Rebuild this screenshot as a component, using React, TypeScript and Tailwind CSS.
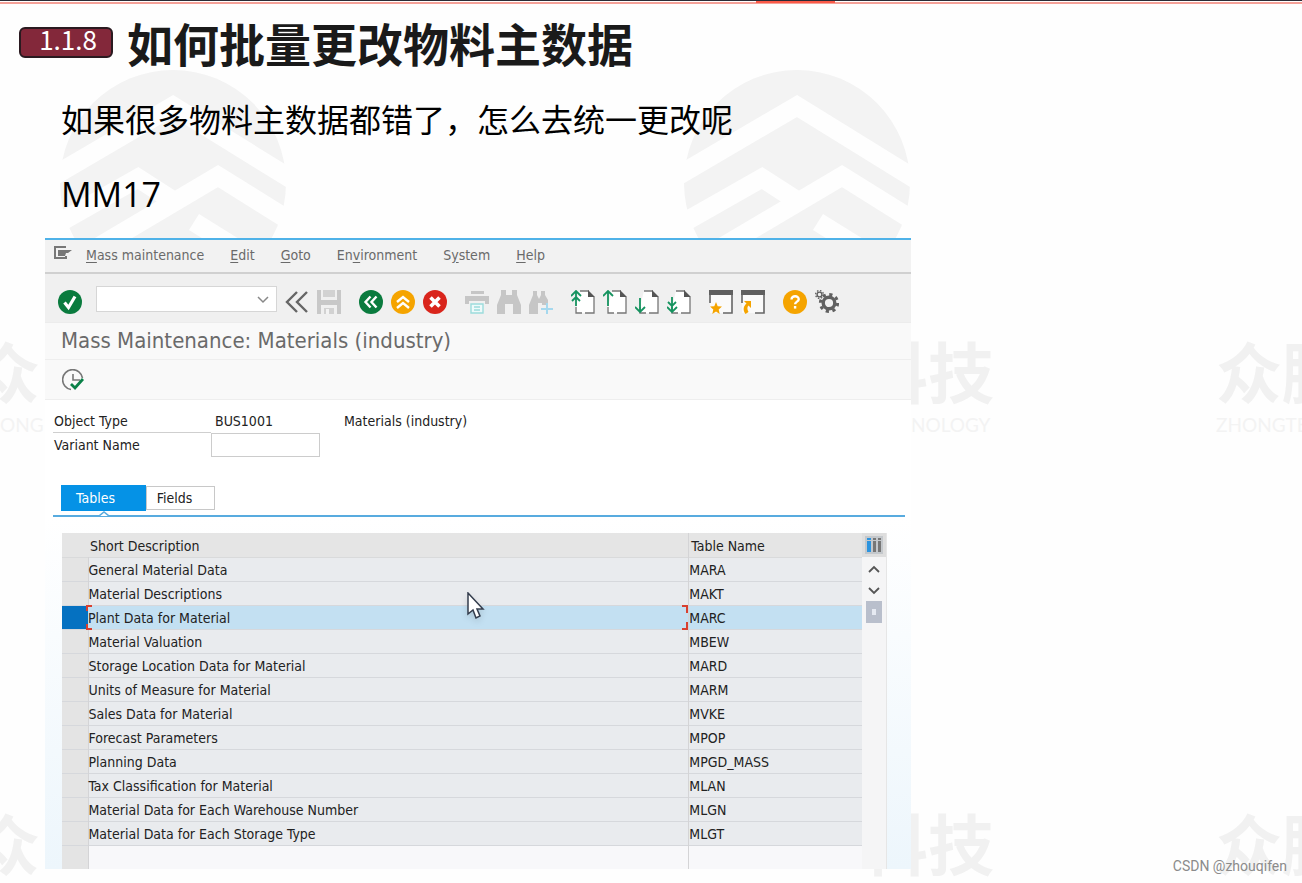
import React from 'react';

const sapFont = "font-['DejaVu_Sans_Condensed','DejaVu_Sans',sans-serif]";
const slideFont = "font-['Noto_Sans_CJK_SC',sans-serif]";

const menus = [
  { before: '', key: 'M', after: 'ass maintenance' },
  { before: '', key: 'E', after: 'dit' },
  { before: '', key: 'G', after: 'oto' },
  { before: 'En', key: 'v', after: 'ironment' },
  { before: 'S', key: 'y', after: 'stem' },
  { before: '', key: 'H', after: 'elp' },
];

const rows = [
  ['General Material Data', 'MARA'],
  ['Material Descriptions', 'MAKT'],
  ['Plant Data for Material', 'MARC'],
  ['Material Valuation', 'MBEW'],
  ['Storage Location Data for Material', 'MARD'],
  ['Units of Measure for Material', 'MARM'],
  ['Sales Data for Material', 'MVKE'],
  ['Forecast Parameters', 'MPOP'],
  ['Planning Data', 'MPGD_MASS'],
  ['Tax Classification for Material', 'MLAN'],
  ['Material Data for Each Warehouse Number', 'MLGN'],
  ['Material Data for Each Storage Type', 'MLGT'],
];

const selectedTable = 'MARC';

function Disc({ color, children }: { color: string; children: React.ReactNode }) {
  return (
    <svg viewBox="0 0 24 24" className="size-6" fill="none" stroke="#fff" strokeWidth="2.4">
      <circle cx="12" cy="12" r="12" fill={color} stroke="none" />
      {children}
    </svg>
  );
}

function PageIcon({ arrow }: { arrow: string }) {
  return (
    <svg viewBox="0 0 24 24" className="size-6" fill="none">
      <path d="M9 1h9l5 5v17H6V13z" fill="#fff" />
      <path d="M9 1h9M23 7v16h-9M5 17v6h6" stroke="#777" strokeWidth="1.3" />
      <path d="M17 0l7 7h-7z" fill="#555" />
      <path d={arrow} stroke="#15935f" strokeWidth="1.8" />
    </svg>
  );
}

function WindowIcon({ children }: { children: React.ReactNode }) {
  return (
    <svg viewBox="0 0 24 24" className="size-6" fill="none">
      <path d="M1 5h22v18H1z" fill="#fafafa" />
      <path d="M1 13V3M23 3v20h-9" stroke="#666" strokeWidth="1.6" />
      <path d="M0 0h24v5H0z" fill="#5f5f5f" />
      {children}
    </svg>
  );
}

function Binoculars({ next = false }: { next?: boolean }) {
  return (
    <svg viewBox="0 0 24 24" className="size-6" fill="#c6c6c6">
      {next ? (
        <>
          <path d="M4 1h4v4l2 4 2-4V1h4v4l3 5v5h-6v-2H9v11H0v-9l4-10z" />
          <path d="M18 13v11M12 19h12" stroke="#a5d8ee" strokeWidth="2" />
        </>
      ) : (
        <path d="M4 0h5v5h6V0h5v5l4 10v9h-8V14H8v10H0v-9L4 5z" />
      )}
    </svg>
  );
}

const toolGroups: { label: string; icon: React.ReactNode }[][] = [
  [
    {
      label: 'Back to start',
      icon: (
        <svg viewBox="0 0 24 24" className="size-6" fill="none" stroke="#666" strokeWidth="2.4">
          <path d="M12 2L2 12l10 10M22 2L12 12l10 10" />
        </svg>
      ),
    },
    {
      label: 'Save',
      icon: (
        <svg viewBox="0 0 24 24" className="size-6" fill="#c8c8c8">
          <path d="M0 0h4v10h16V0h4v24h-4v-9H4v9H0z" />
          <path d="M6 0h12v7H6zM7 18h10v6H7z" fill="#d2d2d2" />
          <path d="M9 19h3v5H9z" fill="#f3f3f3" />
        </svg>
      ),
    },
  ],
  [
    { label: 'Back', icon: <Disc color="#0a7b3e"><path d="M11.500 6.500L6.500 12l5 5.500M17.500 6.500L12.500 12l5 5.500" /></Disc> },
    { label: 'Exit', icon: <Disc color="#f5a400"><path d="M6 12l6-5 6 5M6 18l6-5 6 5" /></Disc> },
    { label: 'Cancel', icon: <Disc color="#d9251c"><path d="M7.500 7.500l9 9M16.500 7.500l-9 9" strokeWidth="3.600" /></Disc> },
  ],
  [
    {
      label: 'Print',
      icon: (
        <svg viewBox="0 0 24 24" className="size-6" fill="#c6c6c6">
          <path d="M6 1h13v3H6zM0 6h24v8h-4v-3H4v3H0z" />
          <path d="M6 14h12v9H6z" fill="#eefafa" stroke="#9cdcdc" strokeWidth="1.4" />
          <path d="M9 17h6M9 20h6" stroke="#9cdcdc" strokeWidth="1.4" />
        </svg>
      ),
    },
    { label: 'Find', icon: <Binoculars /> },
    { label: 'Find next', icon: <Binoculars next /> },
  ],
  [
    { label: 'First page', icon: <PageIcon arrow="M5 16V2M0 6l5-5 5 5M1 11l4-4 4 4" /> },
    { label: 'Previous page', icon: <PageIcon arrow="M5 16V2M0 6l5-5 5 5" /> },
    { label: 'Next page', icon: <PageIcon arrow="M5 8v14M0 17l5 5 5-5" /> },
    { label: 'Last page', icon: <PageIcon arrow="M5 7v15M0 17l5 5 5-5M1 12l4 4 4-4" /> },
  ],
  [
    {
      label: 'New session',
      icon: (
        <WindowIcon>
          <path d="M7 12l1.700 4.200 4.300.3-3.300 2.900 1 4.600L7 21.500 3.300 24l1-4.600L1 16.500l4.300-.3z" fill="#f5a400" />
        </WindowIcon>
      ),
    },
    {
      label: 'Create shortcut',
      icon: (
        <WindowIcon>
          <path d="M3 11h7v7l-2.500-2.500C6 17 6 19 7.500 22l-3 2c-3-4-2-8 1-10.500z" fill="#f5a400" />
        </WindowIcon>
      ),
    },
  ],
  [
    {
      label: 'Help',
      icon: (
        <Disc color="#f5a400">
          <path d="M8.500 9.500c0-4.500 7.500-4 7.200-.2-.2 2.400-3.500 2.300-3.600 5" />
          <path d="M12.100 16v2.600" />
        </Disc>
      ),
    },
    {
      label: 'Customize layout',
      icon: (
        <svg viewBox="0 0 24 24" className="size-6" fill="none" stroke="#606060">
          <circle cx="14" cy="13" r="5.800" strokeWidth="3.400" />
          <circle cx="14" cy="13" r="8.600" strokeWidth="3" strokeDasharray="3.200 3.554" />
          <circle cx="4.500" cy="4.500" r="2.400" strokeWidth="1.400" />
          <circle cx="4.500" cy="4.500" r="3.900" strokeWidth="1.300" strokeDasharray="1.500 1.563" />
        </svg>
      ),
    },
  ],
];

// Faint company logo: a disc cut by white mountain ridges
function RidgeLogo() {
  return (
    <svg viewBox="0 0 226 226" className="h-[226px] w-[226px]" fill="none">
      <circle cx="113" cy="113" r="113" fill="#f3f3f3" />
      <path
        d="M-10 108L113 36l123 76M-10 158L78 108l34 22M30 182L158 106l80 50M134 152l90 56"
        stroke="#fefefe"
        strokeWidth="19"
      />
    </svg>
  );
}

function Watermarks() {
  return (
    <div aria-hidden="true" className={`pointer-events-none absolute inset-0 overflow-hidden ${slideFont}`}>
      <div className="absolute left-[60px] top-[70px] flex gap-[398px]">
        <RidgeLogo />
        <RidgeLogo />
      </div>
      {['top-[334px]', 'top-[806px]'].map((top) => (
        <div
          key={top}
          className={`absolute -left-[26px] flex w-[1400px] whitespace-nowrap text-[66px] font-bold leading-[70px] text-[#f1f1f1] ${top}`}
        >
          <span className="w-[888px]">众</span>
          <span className="w-[354px]">科技</span>
          <span>众腾</span>
        </div>
      ))}
      <div className="absolute left-0 top-[413px] flex w-[1400px] whitespace-nowrap font-['Lato',sans-serif] text-[19px] leading-6 text-[#f3f3f3]">
        <span className="w-[911px]">ONG</span>
        <span className="w-[305px]">NOLOGY</span>
        <span>ZHONGTE</span>
      </div>
    </div>
  );
}

function MenuBar() {
  return (
    <nav className="flex h-[34px] items-center border-b-2 border-[#d0d0d0] bg-[#f2f2f2] pb-0.5 pl-2 text-[#6a6a6a]">
      <svg viewBox="0 0 20 14" className="mb-1 h-3.5 w-5" fill="none">
        <path d="M13 1H2v11h11v-2" stroke="#777" strokeWidth="2" />
        <path d="M5 4h14l-4 3h-2l-1 3H5z" fill="#777" />
      </svg>
      <ul className="ml-[13px] flex gap-[26px]">
        {menus.map((m) => (
          <li key={m.key}>
            <button type="button">
              {m.before}
              <u className="underline-offset-2">{m.key}</u>
              {m.after}
            </button>
          </li>
        ))}
      </ul>
    </nav>
  );
}

function Toolbar() {
  return (
    <div className="flex h-[49px] items-center gap-[18px] border-b border-[#ececec] bg-[#f0f0f0] pl-[13px] pt-2">
      <div className="flex items-center">
        <button type="button" aria-label="Enter" className="mr-[14px]">
          <Disc color="#0a7b3e">
            <path d="M6.500 12.500l4 5 6.500-11" strokeWidth="3.200" />
          </Disc>
        </button>
        <div className="relative mb-1.5 flex">
          <input
            aria-label="Command"
            className="h-[26px] w-[181px] border border-[#d6d6d6] bg-white px-2 outline-none"
          />
          <svg viewBox="0 0 12 8" className="absolute right-2 top-2.5 h-2 w-3" fill="none" stroke="#888" strokeWidth="1.5">
            <path d="M1 1l5 5 5-5" />
          </svg>
        </div>
        <div className="ml-2 flex gap-2">
          {toolGroups[0].map((t) => (
            <button key={t.label} type="button" aria-label={t.label}>{t.icon}</button>
          ))}
        </div>
      </div>
      {toolGroups.slice(1).map((group) => (
        <div key={group[0].label} className="flex gap-2">
          {group.map((t) => (
            <button key={t.label} type="button" aria-label={t.label}>{t.icon}</button>
          ))}
        </div>
      ))}
    </div>
  );
}

// Red corner marks round the focused cell
function FocusMarks() {
  return (
    <>
      <span className="absolute -left-0.5 -top-px h-1.5 w-1.5 border-l-2 border-t-2 border-[#d8402f]" />
      <span className="absolute -bottom-px -left-0.5 h-1.5 w-1.5 border-b-2 border-l-2 border-[#d8402f]" />
      <span className="absolute -top-px right-0 h-2 w-1.5 border-r-2 border-t-2 border-[#d8402f]" />
      <span className="absolute -bottom-px right-0 h-2 w-1.5 border-b-2 border-r-2 border-[#d8402f]" />
    </>
  );
}

function MassTable() {
  return (
    <div className="ml-[17px] mr-6 flex bg-[#f5f5f6]">
      <table className="min-w-0 flex-1 table-fixed border-collapse text-left text-[#222]">
        <colgroup>
          <col className="w-[26px]" />
          <col />
          <col className="w-[173px]" />
        </colgroup>
        <thead>
          <tr className="h-6 border-b border-[#d9dadb] bg-[#e5e5e5]">
            <th aria-label="Select" />
            <th className="p-0 pl-0.5 pt-0.5 font-normal">Short Description</th>
            <th className="border-l border-[#d4d4d6] p-0 pl-0.5 pt-0.5 font-normal">Table Name</th>
          </tr>
        </thead>
        <tbody>
          {rows.map(([description, table]) => {
            const selected = table === selectedTable;
            return (
              <tr
                key={table}
                className={`h-6 border-b border-[#d6d8dc] ${selected ? 'bg-[#c3e0f2]' : 'bg-[#e9ebee]'}`}
              >
                <td className={selected ? 'bg-[#0571c1]' : 'border-r border-[#d4d4d6] bg-[#e4e4e4]'} />
                <td className="relative p-0 pt-0.5">
                  {selected && <FocusMarks />}
                  {description}
                </td>
                <td className="border-l border-[#d4d4d6] p-0 pt-0.5">{table}</td>
              </tr>
            );
          })}
          <tr className="h-6 bg-[#f8f8fa]">
            <td className="border-r border-[#d4d4d6] bg-[#e4e4e4]" />
            <td />
            <td className="border-l border-[#d4d4d6]" />
          </tr>
        </tbody>
      </table>
      <div className="flex w-[25px] flex-col items-center border-r border-[#e6e6e6]">
        <button type="button" aria-label="Configure columns" className="flex h-6 w-full items-center justify-center bg-[#dedede]">
          <svg viewBox="0 0 18 18" className="size-[18px]">
            <path d="M0 0h18v18H0z" fill="#c4c8cc" />
            <path d="M2 2h4v2H2zM2 5h4v11H2z" fill="#2c94df" />
            <path d="M8 2h3v2H8zM8 5h3v11H8zM13 2h3v2h-3zM13 5h3v11h-3z" fill="#777" />
          </svg>
        </button>
        <button type="button" aria-label="Scroll up" className="flex h-6 items-center">
          <svg viewBox="0 0 12 8" className="h-2 w-3" fill="none" stroke="#555" strokeWidth="1.8">
            <path d="M1 7l5-5 5 5" />
          </svg>
        </button>
        <button type="button" aria-label="Scroll down" className="flex h-5 items-center">
          <svg viewBox="0 0 12 8" className="h-2 w-3" fill="none" stroke="#555" strokeWidth="1.8">
            <path d="M1 1l5 5 5-5" />
          </svg>
        </button>
        <div className="flex h-[22px] w-4 items-center justify-center bg-[#b9bfcc]">
          <span className="h-1.5 w-1 bg-[#e6eaf2]" />
        </div>
      </div>
    </div>
  );
}

function SapWindow() {
  return (
    <section className={`relative ml-[45px] w-[66.5%] border-t-2 border-[#4fb2e8] bg-white text-[14px] leading-5 ${sapFont}`}>
      <MenuBar />
      <Toolbar />
      <h2 className="flex h-[37px] items-center border-b border-[#eeeeee] bg-[#f9f9f9] pl-4 text-[22px] text-[#6a6a6a]">
        Mass Maintenance: Materials (industry)
      </h2>
      <div className="flex h-10 items-center border-b border-[#eeeeee] bg-[#f9f9f9] pl-[17px]">
        <button type="button" aria-label="Execute">
          <svg viewBox="0 0 22 22" className="size-[22px]" fill="none">
            <path d="M20.500 9A10 10 0 1 0 9 20.500" stroke="#777" strokeWidth="1.600" />
            <path d="M11 5v6h7" stroke="#777" strokeWidth="1.600" />
            <path d="M9 15l4 4 8-9" stroke="#0a8148" strokeWidth="2.800" />
          </svg>
        </button>
      </div>

      <div className="bg-linear-to-b from-white from-25% to-[#edf6fc]">
        <div className="mx-2 bg-white pb-1 pt-[11px] text-[#222]">
          <div className="flex h-[22px]">
            <span className="w-[158px] border-b border-[#cfcfcf] pl-px">Object Type</span>
            <span className="w-[129px] pl-1">BUS1001</span>
            <span className="pl-1">Materials (industry)</span>
          </div>
          <div className="flex items-center">
            <label htmlFor="variant" className="w-[158px] pl-px">Variant Name</label>
            <input id="variant" className="h-6 w-[109px] border border-[#cccccc] bg-white px-1 outline-none" />
          </div>
          <div className="mt-7 flex items-center pl-2">
            <button type="button" className="relative h-[26px] w-[85px] bg-[#0592e6] pr-4 text-white">
              Tables
              <svg viewBox="0 0 10 5" className="absolute -bottom-[5px] left-[38px] h-[5px] w-2.5" fill="#fff" stroke="#58abdf" strokeWidth="1.500">
                <path d="M0 5l5-4 5 4" />
              </svg>
            </button>
            <button type="button" className="h-6 w-[69px] border border-[#c8c8c8] bg-white pr-3">
              Fields
            </button>
          </div>
        </div>
        <div className="ml-2 mr-1.5 border-t-2 border-[#58abdf]" />
        <div className="pt-4">
          <MassTable />
        </div>
      </div>

      <svg viewBox="0 0 18 28" className="absolute left-[422px] top-[352px] h-7 w-[18px] drop-shadow-md">
        <path d="M1 1v21l5-4 3 8 4-2-3-7h6z" fill="#fff" stroke="#333c4c" strokeWidth="1.500" />
      </svg>
    </section>
  );
}

export default function App() {
  return (
    <main className="relative min-h-screen overflow-hidden bg-[#fefefe] pb-3">
      <Watermarks />
      <div className="relative border-b-2 border-[#f5a198]">
        <div className="h-0.5 border-t border-[#2b2b35]" />
        <div className="absolute left-[58.1%] top-px h-0.5 w-[6%] bg-[#fb5a48]" />
      </div>
      <header className={`relative flex items-center gap-[14px] pl-[19px] pt-1 text-[#1a1a1a] ${slideFont}`}>
        <span className="flex h-[31px] w-[94px] items-center justify-center rounded-md border-2 border-[#2a1a20] bg-[#83283a] pb-1.5 pl-1 text-[26px] leading-6 text-white">
          1.1.8
        </span>
        <h1 className="text-[46px] font-bold leading-[68px]">如何批量更改物料主数据</h1>
      </header>
      <div className={`relative pl-[61px] text-[32px] leading-[48px] text-black ${slideFont}`}>
        <p className="pt-[18px]">如果很多物料主数据都错了，怎么去统一更改呢</p>
        <p className="mb-5 mt-7 font-['Open_Sans',sans-serif] text-[34px]">MM17</p>
      </div>
      <SapWindow />
      <p className="absolute bottom-[7px] right-[15px] font-['Roboto',sans-serif] text-[14px] leading-5 text-[#8b8b8b]">
        CSDN @zhouqifen
      </p>
    </main>
  );
}
